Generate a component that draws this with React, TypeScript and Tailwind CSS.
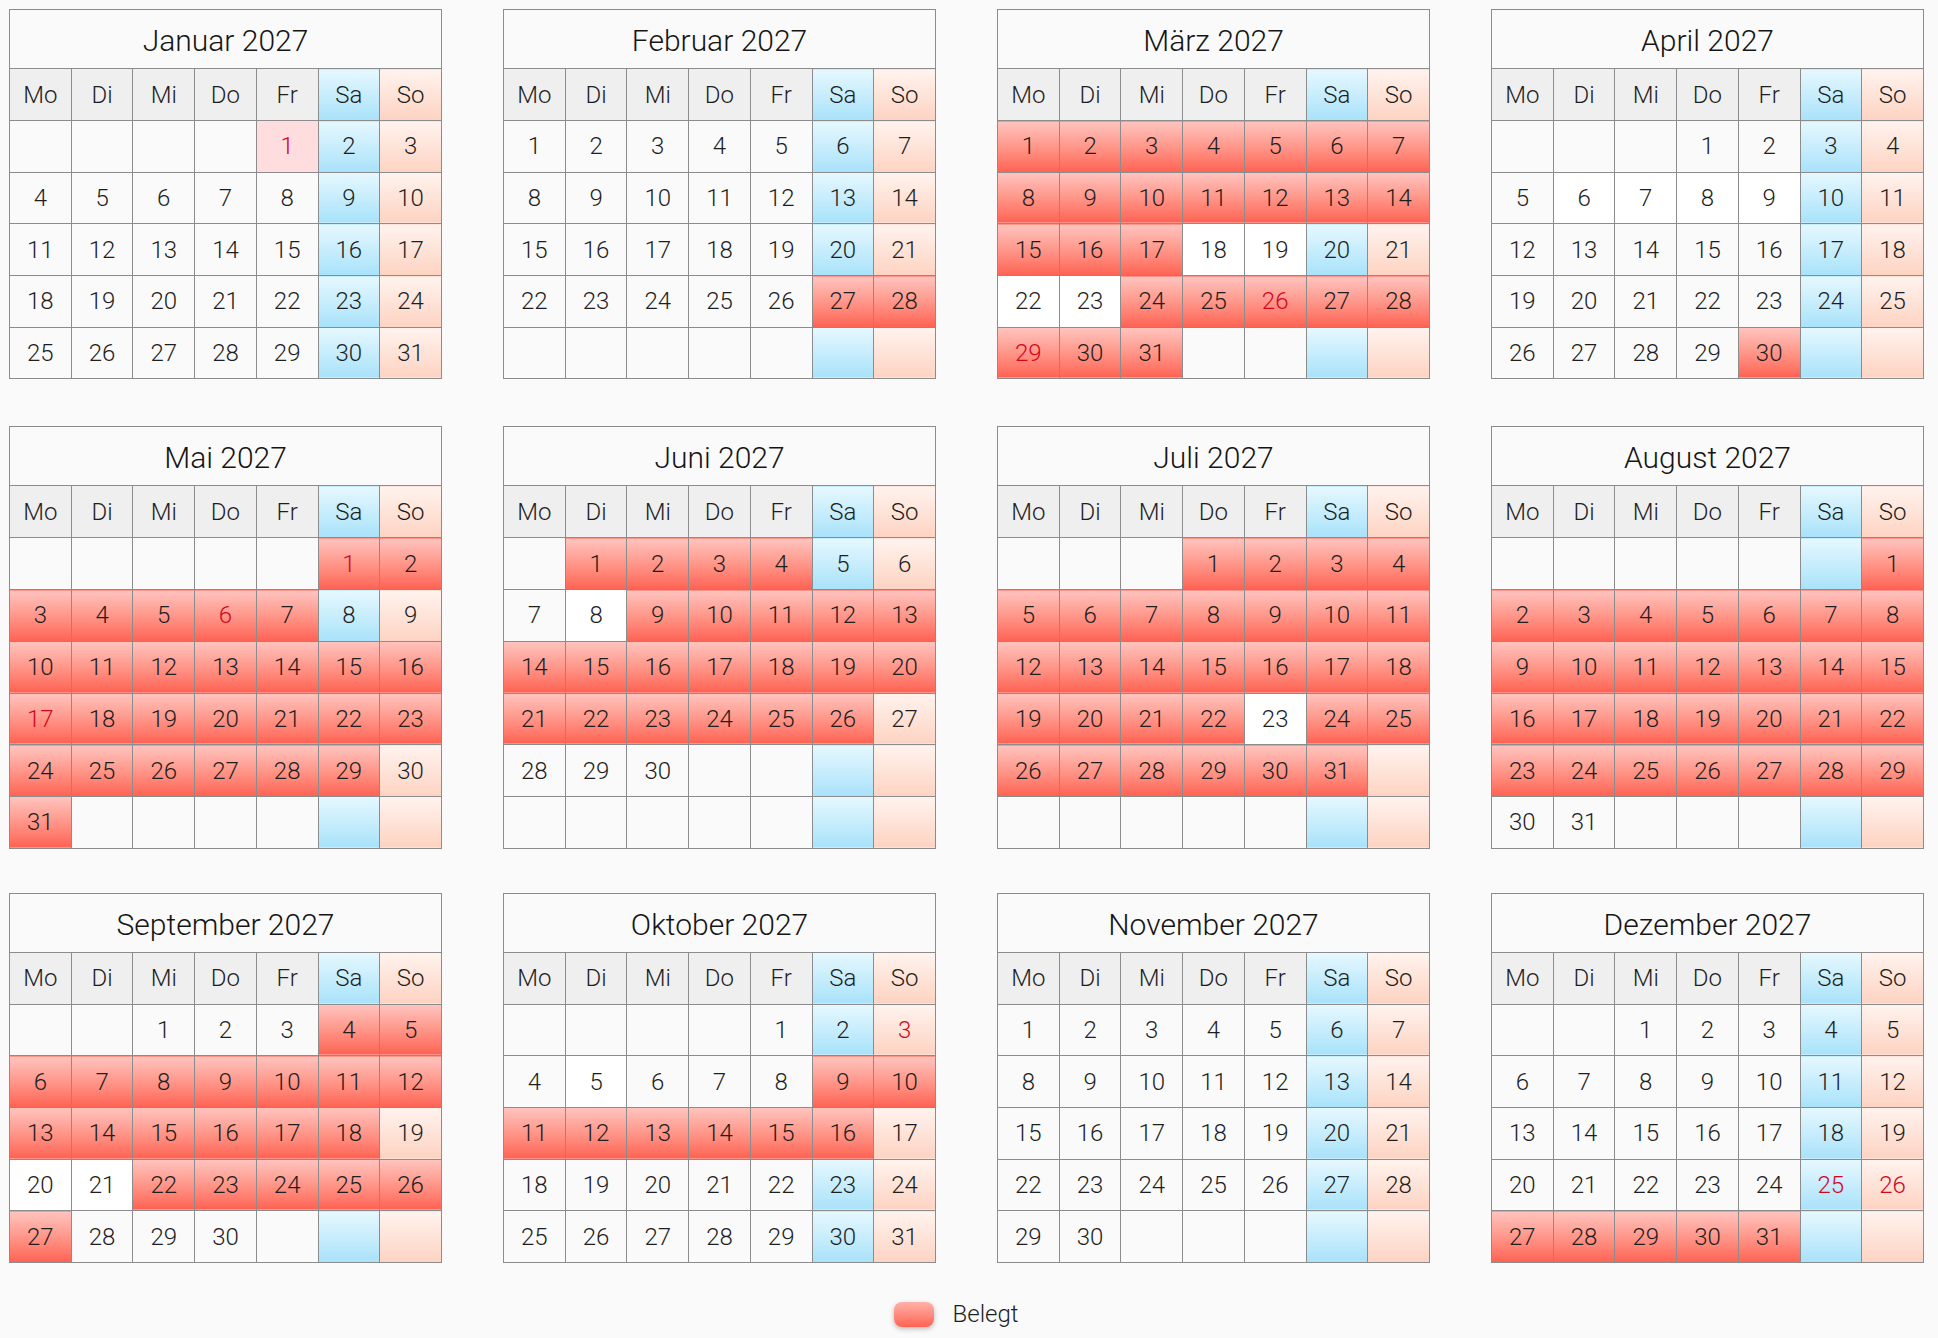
import React from 'react';

const YEAR = 2027;
const MONTHS = [
  'Januar', 'Februar', 'März', 'April', 'Mai', 'Juni',
  'Juli', 'August', 'September', 'Oktober', 'November', 'Dezember',
];
const WEEKDAYS = ['Mo', 'Di', 'Mi', 'Do', 'Fr', 'Sa', 'So'];

// booked ranges: [month (1-12), from, to]
const BOOKED: [number, number, number][] = [
  [2, 27, 28],
  [3, 1, 17], [3, 24, 31],
  [4, 30, 30],
  [5, 1, 7], [5, 10, 29], [5, 31, 31],
  [6, 1, 4], [6, 9, 26],
  [7, 1, 22], [7, 24, 31],
  [8, 1, 29],
  [9, 4, 18], [9, 22, 27],
  [10, 9, 16],
  [12, 27, 31],
];

const HOLIDAYS = ['1-1', '3-26', '3-29', '5-1', '5-6', '5-17', '10-3', '12-25', '12-26'];

// free days that show a slightly brighter cell
const BRIGHT = ['3-18', '3-19', '3-22', '3-23', '4-6', '4-7', '4-8', '4-9', '6-8', '7-23', '9-20', '9-21', '10-5'];

const isBooked = (m: number, d: number) => BOOKED.some(([bm, a, b]) => bm === m && d >= a && d <= b);

function monthInfo(m: number) {
  const first = (new Date(YEAR, m, 1).getDay() + 6) % 7;
  const days = new Date(YEAR, m + 1, 0).getDate();
  return { first, days, weeks: Math.ceil((first + days) / 7) };
}

function cellBg(col: number, m: number, d: number | null) {
  if (d !== null && isBooked(m, d)) return 'bg-linear-to-b from-[#ffc4bf] to-[#ff6152]';
  if (d !== null && HOLIDAYS.includes(`${m}-${d}`) && col < 5) return 'bg-[#ffdcde]';
  if (col === 5) return 'bg-linear-to-b from-[#e6f8ff] to-[#a8e2fa]';
  if (col === 6) return 'bg-linear-to-b from-[#fff3ee] to-[#fdd3c2]';
  if (d !== null && BRIGHT.includes(`${m}-${d}`)) return 'bg-white';
  return 'bg-[#fafafa]';
}

function headBg(col: number) {
  if (col === 5) return 'bg-linear-to-b from-[#e6f8ff] to-[#a8e2fa]';
  if (col === 6) return 'bg-linear-to-b from-[#fff3ee] to-[#fdd3c2]';
  return 'bg-[#efefef]';
}

function MonthTable({ month, weeks }: { month: number; weeks: number }) {
  const { first, days } = monthInfo(month);
  const m = month + 1;
  const rows: (number | null)[][] = [];
  for (let w = 0; w < weeks; w++) {
    const row: (number | null)[] = [];
    for (let c = 0; c < 7; c++) {
      const d = w * 7 + c - first + 1;
      row.push(d >= 1 && d <= days ? d : null);
    }
    rows.push(row);
  }

  return (
    <table className="w-[433px] table-fixed border-collapse text-[#1e1e1e]">
      <thead>
        <tr>
          <th colSpan={7} className="h-[59px] border border-[#8c8c8c] bg-[#fafafa] pt-[3px] text-center text-[30px] font-light text-[#151515]">
            {MONTHS[month]} {YEAR}
          </th>
        </tr>
        <tr>
          {WEEKDAYS.map((w, i) => (
            <th key={w} className={`h-[52px] border border-[#8c8c8c] text-center text-[24px] font-light ${headBg(i)}`}>
              {w}
            </th>
          ))}
        </tr>
      </thead>
      <tbody>
        {rows.map((row, ri) => (
          <tr key={ri}>
            {row.map((d, ci) => {
              const red = d !== null && HOLIDAYS.includes(`${m}-${d}`);
              return (
                <td
                  key={ci}
                  className={`h-[51.7px] border border-[#8c8c8c] text-center text-[24px] font-light ${cellBg(ci, m, d)} ${red ? 'text-[#d2061e]' : 'text-[#1e1e1e]'}`}
                >
                  {d ?? ''}
                </td>
              );
            })}
          </tr>
        ))}
      </tbody>
    </table>
  );
}

export default function App() {
  const groups = [0, 1, 2].map((g) => {
    const months = [0, 1, 2, 3].map((i) => g * 4 + i);
    const weeks = Math.max(...months.map((mm) => monthInfo(mm).weeks));
    return { months, weeks };
  });

  return (
    <div className="min-h-screen bg-[#fafafa] pl-[9px] pt-[9px] font-['Roboto','Helvetica_Neue',Arial,sans-serif]">
      <div className="flex flex-col">
        {groups.map((g, gi) => (
          <div
            key={gi}
            className={`flex items-start gap-[61px] ${gi === 1 ? 'mt-[47px]' : ''} ${gi === 2 ? 'mt-[44px]' : ''}`}
          >
            {g.months.map((mm) => (
              <MonthTable key={mm} month={mm} weeks={g.weeks} />
            ))}
          </div>
        ))}
      </div>

      <div className="mt-[33px] flex items-center justify-center gap-[19px] pr-[35px]">
        <span className="h-[25px] w-[40px] rounded-[8px] bg-linear-to-b from-[#ffb0a9] to-[#ff6152] shadow-[0_2px_5px_rgba(0,0,0,0.25)]"></span>
        <span className="text-[24px] font-light text-[#1e1e1e]">Belegt</span>
      </div>
    </div>
  );
}
